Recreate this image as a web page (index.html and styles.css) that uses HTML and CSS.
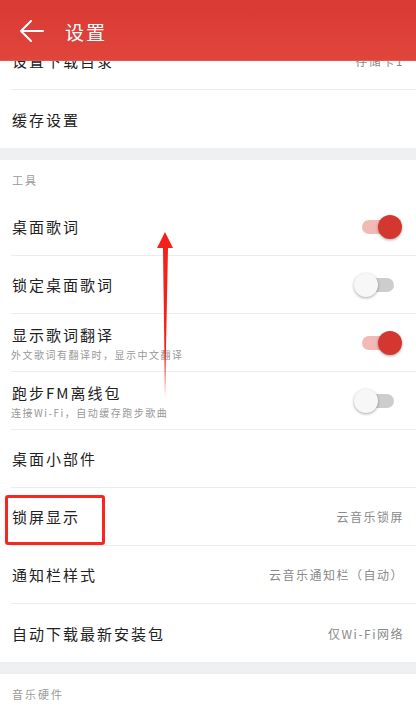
FILE: index.html
```html
<!DOCTYPE html>
<html lang="zh-CN">
<head>
<meta charset="utf-8">
<title>设置</title>
<link rel="stylesheet" href="styles.css">
</head>
<body>
<div class="screen">
  <header class="appbar">
    <svg class="back" width="24" height="22" viewBox="0 0 24 22">
      <path d="M11 1 L1 11 L11 21 M1 11 L23 11" fill="none" stroke="#fff" stroke-width="2" stroke-linecap="round" stroke-linejoin="round"/>
    </svg>
    <span class="appbar-title">设置</span>
  </header>

  <div class="list">
    <div class="group">
      <div class="row"><span class="title">设置下载目录</span><span class="value">存储卡1</span></div>
      <div class="row"><span class="title">缓存设置</span></div>
    </div>
    <div class="gap"></div>
    <div class="group">
      <div class="label">工具</div>
      <div class="row"><span class="title">桌面歌词</span><span class="switch on"><i></i></span></div>
      <div class="row"><span class="title">锁定桌面歌词</span><span class="switch"><i></i></span></div>
      <div class="row">
        <div class="texts"><span class="title">显示歌词翻译</span><span class="sub">外文歌词有翻译时，显示中文翻译</span></div>
        <span class="switch on"><i></i></span>
      </div>
      <div class="row">
        <div class="texts"><span class="title">跑步FM离线包</span><span class="sub">连接Wi-Fi，自动缓存跑步歌曲</span></div>
        <span class="switch"><i></i></span>
      </div>
      <div class="row"><span class="title">桌面小部件</span></div>
      <div class="row"><span class="title">锁屏显示</span><span class="value">云音乐锁屏</span></div>
      <div class="row"><span class="title">通知栏样式</span><span class="value">云音乐通知栏（自动）</span></div>
      <div class="row"><span class="title">自动下载最新安装包</span><span class="value">仅Wi-Fi网络</span></div>
    </div>
    <div class="gap"></div>
    <div class="group">
      <div class="label">音乐硬件</div>
      <div class="row"><span class="title">&nbsp;</span></div>
    </div>
  </div>

  <div class="highlight"></div>
  <svg class="annot-arrow" width="20" height="170" viewBox="0 0 20 170">
    <polygon points="9,0 17,16 12,16 9,166 7,16 1,16" fill="#f4211a"/>
  </svg>
</div>
</body>
</html>
```

FILE: styles.css
```css
* { box-sizing: border-box; }
html, body { margin: 0; padding: 0; }
body {
  width: 416px;
  height: 716px;
  overflow: hidden;
  background: #fff;
  font-family: "Noto Sans CJK SC", "Noto Sans", sans-serif;
}
.screen {
  position: relative;
  width: 416px;
  height: 716px;
  overflow: hidden;
  background: #fff;
}
.appbar {
  position: absolute;
  top: 0; left: 0; right: 0;
  height: 61px;
  background: linear-gradient(#d93a33, #e0453c);
  border-bottom: 1px solid #e9564d;
  display: flex;
  align-items: center;
  padding-left: 20px;
  z-index: 2;
}
.back { margin-top: 1px; }
.appbar-title {
  margin-left: 21px;
  color: #fff;
  font-size: 19px;
  letter-spacing: 2px;
  line-height: 1;
  margin-top: 2px;
}
.list {
  padding-top: 32px;
}
.group { background: #fff; }
.gap { height: 12px; background: #eff0f2; }
.row {
  height: 58px;
  margin-left: 11px;
  padding-right: 12px;
  display: flex;
  align-items: center;
  justify-content: space-between;
  border-bottom: 1px solid #ededed;
}
.group .row:last-child { border-bottom: none; }
.title {
  font-size: 15px;
  letter-spacing: 2px;
  color: #222;
  padding-left: 1px;
}
.texts { display: flex; flex-direction: column; }
.texts .title { line-height: 20px; margin-top: 1px; }
.sub {
  font-size: 10px;
  letter-spacing: 1.5px;
  color: #999;
  line-height: 14px;
  margin-top: 3px;
}
.value {
  font-size: 12px;
  letter-spacing: 1.5px;
  color: #8a8a8a;
}
.label {
  height: 38px;
  padding-left: 12px;
  padding-top: 2px;
  display: flex;
  align-items: center;
  font-size: 11px;
  letter-spacing: 2px;
  color: #9a9a9a;
}
.switch {
  position: relative;
  width: 48px;
  height: 24px;
  margin-right: 2px;
}
.switch::before {
  content: "";
  position: absolute;
  left: 8px; right: 8px; top: 5px;
  height: 14px;
  border-radius: 7px;
  background: #cdcdcd;
}
.switch i {
  position: absolute;
  left: 0; top: 0;
  width: 24px; height: 24px;
  border-radius: 50%;
  background: #f7f7f7;
  box-shadow: 0 1px 3px rgba(0,0,0,0.35);
}
.switch.on::before { background: #f3b9b6; }
.switch.on i {
  left: 24px;
  background: #d3372f;
}
.highlight {
  position: absolute;
  left: 5px; top: 495px;
  width: 100px; height: 50px;
  border: 3px solid #f8271d;
  border-radius: 3px;
  z-index: 3;
}
.annot-arrow {
  position: absolute;
  left: 156px; top: 232px;
  z-index: 3;
}
```
